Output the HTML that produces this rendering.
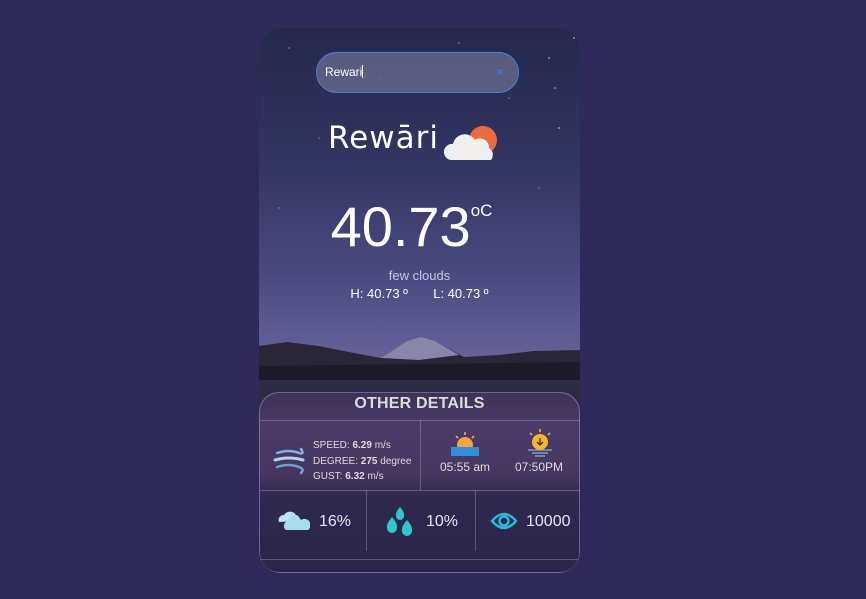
<!DOCTYPE html>
<html><head><meta charset="utf-8"><style>
body{margin:0;width:866px;height:599px;background:#302a5a;font-family:"Liberation Sans",sans-serif;overflow:hidden;position:relative}
.card{position:absolute;left:259px;top:28px;width:321px;height:545px;border-radius:22px;overflow:hidden;background:linear-gradient(#25284c 0%,#333563 25%,#4a4a80 45%,#5d5b92 56%,#6a6399 62%,#3a3152 70%,#2c2646 100%)}
.abs{position:absolute}
.search{left:57px;top:24px;width:203px;height:41px;border-radius:21px;border:1.5px solid #4d7fd0;background:rgba(140,140,175,.5);box-sizing:border-box}
.txt{color:#fff;text-align:center;width:100%}
.det{left:0;top:364px;width:321px;height:181px;border-radius:20px;border:1px solid rgba(190,180,220,.45);box-sizing:border-box;background:linear-gradient(#3d3358 0%,#4b3a68 20%,#463660 45%,#2f2850 60%,#2b2548 100%)}
.line{background:rgba(190,180,220,.35)}
.w{color:#e8e6f2;font-size:16px}
</style></head><body>
<div class="card">
 <svg class="abs" style="left:0;top:0" width="321" height="400">
  <g fill="#c8c4ff" opacity=".6">
   <circle cx="30" cy="20" r=".8"/><circle cx="290" cy="30" r="1"/><circle cx="250" cy="70" r=".8"/><circle cx="300" cy="100" r="1"/><circle cx="60" cy="110" r=".7"/><circle cx="200" cy="15" r=".8"/><circle cx="280" cy="160" r=".7"/><circle cx="20" cy="180" r=".7"/><circle cx="315" cy="10" r="1"/><circle cx="296" cy="60" r="1"/><circle cx="120" cy="50" r=".6"/>
  </g>
  <path d="M0 318 L28 314 L60 318 L100 326 L122 330 L148 313 L162 309 L176 313 L205 329 L240 327 L275 323 L321 322 L321 400 L0 400Z" fill="#2a2638"/>
  <path d="M122 330 L148 313 L162 309 L176 313 L200 327 L160 332Z" fill="#8a86aa"/>
  <path d="M0 338 L321 334 L321 400 L0 400Z" fill="#1d1b2a"/>
  <rect y="352" width="321" height="48" fill="#2e2b44"/>
 </svg>
 <div class="abs search"><span class="abs" style="left:8px;top:12px;color:#fff;font-size:12px">Rewari<span style="display:inline-block;width:1px;height:13px;background:#fff;vertical-align:-2px"></span></span><span class="abs" style="right:14px;top:11px;color:#4d7fd0;font-size:13px">×</span></div>
 <div class="abs" style="left:69px;top:92px;color:#fff;font-size:31px;font-family:'DejaVu Sans',sans-serif;letter-spacing:1px">Rewāri</div>
 <svg class="abs" style="left:184px;top:96px" width="58" height="40"><circle cx="40" cy="16" r="14" fill="#ec6a3f"/><path d="M8 36 a8 8 0 0 1 2-16 a12 12 0 0 1 22-4 a9 9 0 0 1 14 8 a8 8 0 0 1 2 12Z" fill="#f1efee"/></svg>
 <div class="abs txt" style="left:-8px;top:166px;font-size:56px">40.73<sup style="font-size:17px;vertical-align:30px">oC</sup></div>
 <div class="abs txt" style="top:240px;font-size:13px;color:#c8c4e4">few clouds</div>
 <div class="abs txt" style="top:258px;font-size:13px">H: 40.73 º &nbsp;&nbsp;&nbsp;&nbsp;&nbsp; L: 40.73 º</div>
 <div class="abs det">
  <div class="abs txt" style="top:2px;font-size:16px;color:#ddd;font-weight:bold;letter-spacing:.2px">OTHER DETAILS</div>
  <div class="abs line" style="left:0;top:27px;width:321px;height:1px"></div>
  <div class="abs line" style="left:160px;top:27px;width:1px;height:70px"></div>
  <div class="abs line" style="left:0;top:97px;width:321px;height:1px"></div>
  <div class="abs line" style="left:106px;top:97px;width:1px;height:61px"></div>
  <div class="abs line" style="left:215px;top:97px;width:1px;height:61px"></div>
  <div class="abs line" style="left:0;top:166px;width:321px;height:1px"></div>
  <svg class="abs" style="left:13px;top:50px" width="34" height="34" fill="none" stroke-linecap="round"><path d="M4 10 Q16 6 26 10 Q32 12 28 6" stroke="#7fb3d8" stroke-width="2.5"/><path d="M2 17 Q16 13 30 17" stroke="#a8d8ec" stroke-width="3"/><path d="M4 24 Q16 20 26 24 Q32 26 28 30" stroke="#6ba3cc" stroke-width="2.5"/></svg>
  <div class="abs" style="left:53px;top:45px;font-size:10px;color:#ddd;line-height:15.5px">SPEED: <b>6.29</b> m/s<br>DEGREE: <b>275</b> degree<br>GUST: <b>6.32</b> m/s</div>
  <svg class="abs" style="left:190px;top:38px" width="30" height="26"><circle cx="15" cy="14" r="8" fill="#f4a43a"/><rect x="1" y="16" width="28" height="9" fill="#2f8fe0"/><g stroke="#f4c24a" stroke-width="1.5"><line x1="15" y1="1" x2="15" y2="4"/><line x1="6" y1="5" x2="8" y2="7"/><line x1="24" y1="5" x2="22" y2="7"/></g></svg>
  <div class="abs" style="left:180px;top:67px;font-size:12px;color:#ddd">05:55 am</div>
  <svg class="abs" style="left:265px;top:36px" width="30" height="28"><circle cx="15" cy="13" r="8" fill="#f4b828"/><path d="M15 9v6M12 13l3 3 3-3" stroke="#333" stroke-width="1.3" fill="none"/><g stroke="#f4c24a" stroke-width="1.5"><line x1="15" y1="0" x2="15" y2="3"/><line x1="5" y1="4" x2="7" y2="6"/><line x1="25" y1="4" x2="23" y2="6"/></g><g stroke="#7fb3d8" stroke-width="1.3"><line x1="3" y1="21" x2="27" y2="21"/><line x1="7" y1="24" x2="23" y2="24"/><line x1="10" y1="27" x2="20" y2="27"/></g></svg>
  <div class="abs" style="left:255px;top:67px;font-size:12px;color:#ddd">07:50PM</div>
  <svg class="abs" style="left:16px;top:117px" width="34" height="20"><path d="M3 12 a5 5 0 0 1 5-7 a7 7 0 0 1 12 0 a4 4 0 0 1 3 6Z" fill="#bfe3f5"/><path d="M10 20 a5 5 0 0 1 2-9 a7 7 0 0 1 13-1 a5 5 0 0 1 7 10Z" fill="#a7dcf0"/></svg>
  <div class="abs w" style="left:59px;top:120px">16%</div>
  <svg class="abs" style="left:124px;top:113px" width="32" height="32" fill="#2bc7c9"><path d="M16 1 q5 6 4 9 a4 4 0 0 1-8 0 q-1-3 4-9Z"/><path d="M8 11 q6 7 5 11 a5 5 0 0 1-10 0 q-1-4 5-11Z"/><path d="M23 14 q6 7 5 11 a5 5 0 0 1-10 0 q-1-4 5-11Z"/></svg>
  <div class="abs w" style="left:166px;top:120px">10%</div>
  <svg class="abs" style="left:230px;top:117px" width="28" height="22" fill="none" stroke="#2bb8d8" stroke-width="2.5"><path d="M2 11 Q14 -3 26 11 Q14 25 2 11Z"/><circle cx="14" cy="11" r="4.5"/></svg>
  <div class="abs w" style="left:266px;top:120px">10000</div>
 </div>
</div>
</body></html>
